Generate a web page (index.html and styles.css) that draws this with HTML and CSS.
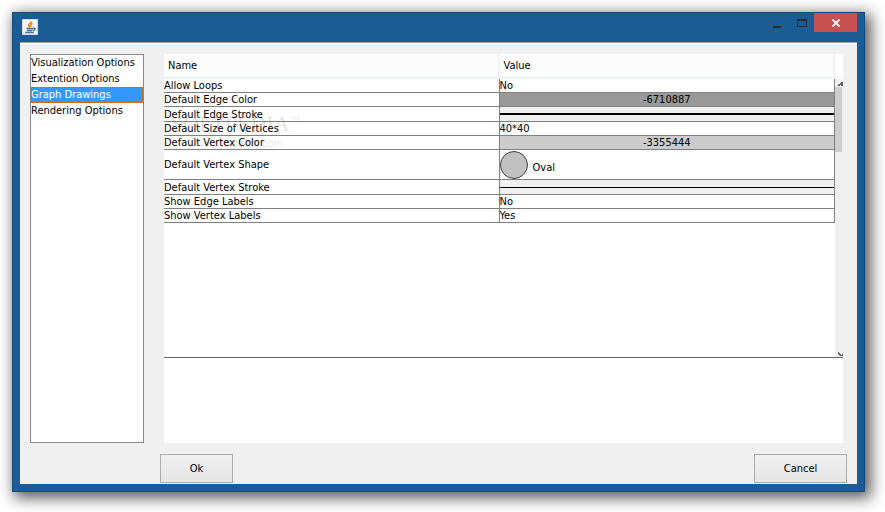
FILE: index.html
```html
<!DOCTYPE html>
<html lang="en">

<head>
    <meta charset="UTF-8">
    <meta name="viewport" content="width=device-width, initial-scale=1.0">
    <title>Options</title>
    <link rel="stylesheet" href="styles.css">
</head>
<body>
    <div class="window">
        <header class="titlebar">
            <svg class="app-icon" width="16" height="16" viewBox="0 0 16 16">
                <rect width="16" height="16" rx="1" fill="#d4dade"/>
                <rect x="1" y="1" width="14" height="14" fill="#f4f5f5"/>
                <path d="M9.500 2.500C9.500 4.500 6 4.500 6.500 6.500L8 8.500M10.500 4.500C8 5.500 8.500 6.500 9 8" fill="none" stroke="#ee8322" stroke-width="1.500"/>
                <path d="M4.500 9.500H11M5 11.500H10.500M3 13.500H12M11 9.200C14 8.500 13.500 11 11 11.500" fill="none" stroke="#4b7698" stroke-width="1.400"/>
            </svg>
            <div class="controls">
                <button class="control" aria-label="Minimize">
                    <svg width="8" height="10"><rect y="8" width="8" height="2" fill="#2b2b2b"/></svg>
                </button>
                <button class="control" aria-label="Maximize">
                    <svg width="10" height="8"><path d="M0 0H10V8H0ZM1 2V7H9V2Z" fill="#2b2b2b" fill-rule="evenodd"/></svg>
                </button>
                <button class="control close" aria-label="Close">
                    <svg width="8" height="8" viewBox="0 0 8 8"><path d="M0.500 0.500L7.500 7.500M7.500 0.500L0.500 7.500" stroke="#fff" stroke-width="1.800"/></svg>
                </button>
            </div>
        </header>
        <main class="content">
            <div class="panels">
                <ul class="categories">
                    <li><button>Visualization Options</button></li>
                    <li><button>Extention Options</button></li>
                    <li><button class="selected">Graph Drawings</button></li>
                    <li><button>Rendering Options</button></li>
                </ul>
                <div class="split">
                    <div class="scroll">
                        <div class="view">
                            <table class="props">
                                <thead>
                                    <tr><th>Name</th><th>Value</th></tr>
                                </thead>
                                <tbody>
                                    <tr><td>Allow Loops</td><td>No</td></tr>
                                    <tr><td>Default Edge Color</td><td class="color edge">-6710887</td></tr>
                                    <tr class="tall"><td>Default Edge Stroke</td><td class="stroke"><hr class="thick"></td></tr>
                                    <tr><td>Default Size of Vertices</td><td>40*40</td></tr>
                                    <tr><td>Default Vertex Color</td><td class="color vertex">-3355444</td></tr>
                                    <tr class="shape">
                                        <td>Default Vertex Shape</td>
                                        <td>
                                            <div class="oval">
                                                <svg width="28" height="28"><circle cx="14" cy="14" r="13.500" fill="#c0c0c0" stroke="#404040"/></svg>
                                                <span>Oval</span>
                                            </div>
                                        </td>
                                    </tr>
                                    <tr class="tall"><td>Default Vertex Stroke</td><td class="stroke"><hr></td></tr>
                                    <tr><td>Show Edge Labels</td><td>No</td></tr>
                                    <tr><td>Show Vertex Labels</td><td>Yes</td></tr>
                                </tbody>
                            </table>
                        </div>
                        <div class="scrollbar">
                            <div class="corner"></div>
                            <svg class="arrow" width="8" height="8"><path d="M2 7L4 5H5L6 3H8V7H6V6H5V7Z" fill="#606060"/></svg>
                            <div class="thumb"></div>
                            <svg class="arrow down" width="8" height="8"><path d="M3 3H4V4H5V5H6V6H7V5H8V7H5L3 5Z" fill="#606060"/></svg>
                        </div>
                        <div class="watermark">
                            <span class="mark">SOFTPEDIA<sup>™</sup></span>
                            <span class="site">www.softpedia.com</span>
                        </div>
                    </div>
                    <div class="details"></div>
                </div>
            </div>
            <footer class="actions">
                <button class="btn ok">Ok</button>
                <button class="btn cancel">Cancel</button>
            </footer>
        </main>
    </div>
</body>
</html>
```

FILE: styles.css
```css
* {
    box-sizing: border-box;
}
body {
    margin: 0;
    padding: 12px 20px 20px 12px;
    height: 100vh;
    background: #fff;
    color: #000;
    font: 11px/14px Tahoma, "DejaVu Sans Condensed", "Noto Sans", sans-serif;
}
button {
    margin: 0;
    padding: 0;
    border: 0;
    background: none;
    color: inherit;
    font: inherit;
}
.window {
    display: flex;
    flex-direction: column;
    height: 100%;
    padding: 0 7px 7px;
    border: 1px solid #164a78;
    background: #1a5c96;
    box-shadow: 4px 4px 14px 2px rgba(0, 0, 0, .65);
}
.titlebar {
    display: flex;
    justify-content: space-between;
    height: 29px;
}
.app-icon {
    margin: 6px 0 0 2px;
}
.controls {
    display: flex;
    align-items: flex-start;
}
.control {
    display: flex;
    align-items: center;
    justify-content: center;
    width: 25px;
    height: 19px;
}
.close {
    width: 43px;
    background: #c75050;
}
.content {
    display: flex;
    flex: 1;
    flex-direction: column;
    min-height: 0;
    padding: 11px 10px 1px;
    border-top: 1px solid #a0a0a0;
    background: #f0f0f0;
    box-shadow: inset 0 1px #fff;
}
.panels {
    display: flex;
    flex: 1;
    gap: 20px;
    min-height: 0;
    padding-right: 4px;
}
.categories {
    width: 114px;
    margin: 0;
    padding: 0;
    border: 1px solid #828790;
    background: #fff;
    list-style: none;
}
.categories button {
    display: block;
    width: 100%;
    height: 16px;
    text-align: left;
    white-space: nowrap;
}
.categories .selected {
    outline: 1px dotted #cc6600;
    outline-offset: -1px;
    background: #3399ff;
    color: #fff;
}
.split {
    display: flex;
    flex: 1;
    flex-direction: column;
}
.scroll {
    position: relative;
    display: flex;
    flex: 1;
    border-bottom: 1px solid #696969;
    background: #fff;
}
.details {
    height: 85px;
    background: #fff;
}
.view {
    flex: 1;
}
.props {
    width: 100%;
    table-layout: fixed;
    border-collapse: separate;
    border-spacing: 0;
}
.props th {
    height: 25px;
    padding: 1px 4px 0;
    border-right: 2px solid #ecf2f8;
    border-bottom: 2px solid #ecf2f8;
    background: #fcfcfc;
    font-weight: normal;
    text-align: left;
}
.props td {
    height: 14px;
    padding: 0;
    border-right: 1px solid #808080;
    border-bottom: 1px solid #808080;
    line-height: 13px;
}
.props .tall td {
    height: 15px;
}
.props .shape td {
    height: 30px;
}
.props .color {
    text-align: center;
}
.props .edge {
    background: #999;
}
.props .vertex {
    background: #ccc;
}
.props .stroke {
    background: #f0f0f0;
}
.stroke hr {
    height: 1px;
    margin: 0;
    border: 0;
    background: #000;
}
.stroke .thick {
    height: 2px;
}
.oval {
    display: flex;
    align-items: center;
    gap: 5px;
}
.oval span {
    padding-top: 6px;
}
.scrollbar {
    display: flex;
    flex-direction: column;
    width: 8px;
    background: #f0f0f0;
}
.corner {
    height: 25px;
    background: #fff;
}
.arrow {
    display: block;
}
.down {
    margin-top: auto;
}
.thumb {
    width: 7px;
    height: 65px;
    background: #cdcdcd;
}
.watermark {
    position: absolute;
    top: 58px;
    left: 7px;
    display: flex;
    flex-direction: column;
    align-items: center;
    color: rgba(0, 0, 0, .13);
    pointer-events: none;
}
.mark {
    font: 22px/24px "Liberation Serif", serif;
}
.mark sup {
    font-size: 10px;
    line-height: 10px;
}
.site {
    font: 11px/14px "Liberation Sans", sans-serif;
}
.actions {
    display: flex;
    justify-content: space-between;
    padding: 11px 0 0 130px;
}
.btn {
    height: 29px;
    border: 1px solid #acacac;
    background: linear-gradient(#f0f0f0, #e5e5e5);
}
.ok {
    width: 73px;
}
.cancel {
    width: 93px;
}
```
